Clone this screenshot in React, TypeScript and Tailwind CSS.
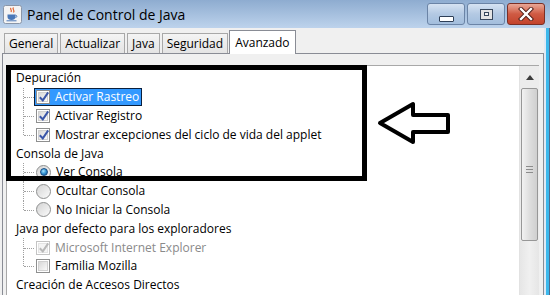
import React from 'react'

type Row = {
  kind: 'header' | 'check' | 'radio'
  label: string
  checked?: boolean
  selected?: boolean
  disabled?: boolean
  last?: boolean
}

const ROWS: Row[] = [
  { kind: 'header', label: 'Depuración' },
  { kind: 'check', label: 'Activar Rastreo', checked: true, selected: true },
  { kind: 'check', label: 'Activar Registro', checked: true },
  { kind: 'check', label: 'Mostrar excepciones del ciclo de vida del applet', checked: true, last: true },
  { kind: 'header', label: 'Consola de Java' },
  { kind: 'radio', label: 'Ver Consola', checked: true },
  { kind: 'radio', label: 'Ocultar Consola' },
  { kind: 'radio', label: 'No Iniciar la Consola', last: true },
  { kind: 'header', label: 'Java por defecto para los exploradores' },
  { kind: 'check', label: 'Microsoft Internet Explorer', checked: true, disabled: true },
  { kind: 'check', label: 'Familia Mozilla', last: true },
  { kind: 'header', label: 'Creación de Accesos Directos' },
  { kind: 'radio', label: 'No Crear Nunca' },
]

const TABS = ['General', 'Actualizar', 'Java', 'Seguridad']

function JavaIcon() {
  return (
    <svg width="19" height="19" viewBox="0 0 19 19">
      <rect x="0.5" y="0.5" width="18" height="18" rx="2" fill="#f4f4f4" stroke="#8a96a8" />
      <path d="M8 3c-1.5 1.5 1.5 2 0 4M10.5 2.5c-2 2 2 2.5 0 5" stroke="#e0602a" strokeWidth="1.2" fill="none" />
      <path d="M4.5 9.5h8v2.5c0 2-1.8 3-4 3s-4-1-4-3z" fill="#4a78b8" />
      <path d="M12.5 10.2c1.8 0 1.8 2.3 0 2.3" stroke="#4a78b8" strokeWidth="1" fill="none" />
      <path d="M3.5 15.8h10" stroke="#4a78b8" strokeWidth="1" />
    </svg>
  )
}

function CaptionButton({ kind }: { kind: 'min' | 'max' | 'close' }) {
  const isClose = kind === 'close'
  return (
    <div
      className={
        'relative w-[38px] h-[22px] rounded-[3px] border flex items-center justify-center overflow-hidden ' +
        (isClose
          ? 'border-[#7a2f26] bg-gradient-to-b from-[#e8a797] via-[#cf5a43] to-[#c3432c]'
          : 'border-[#6b84a6] bg-gradient-to-b from-[#d6e3f2] via-[#b3c9e3] to-[#a3bedd]')
      }
    >
      {kind === 'min' && <div className="mt-[9px] w-[15px] h-[6px] bg-white border border-[#2e3f57] rounded-[1px]" />}
      {kind === 'max' && (
        <div className="w-[13px] h-[11px] bg-[#e4e4e4] border border-[#38475c] flex items-center justify-center">
          <div className="w-[5px] h-[4px] border border-[#38475c] bg-[#f4f4f4]" />
        </div>
      )}
      {isClose && (
        <svg width="16" height="14" viewBox="0 0 16 14">
          <path d="M3 2l10 10M13 2L3 12" stroke="#4a1a14" strokeWidth="4.2" strokeLinecap="square" />
          <path d="M3 2l10 10M13 2L3 12" stroke="#ffffff" strokeWidth="2.4" strokeLinecap="square" />
        </svg>
      )}
    </div>
  )
}

function CheckBox({ checked, disabled }: { checked?: boolean; disabled?: boolean }) {
  return (
    <div
      className={
        'relative w-[14px] h-[14px] border flex items-center justify-center bg-white ' +
        (disabled ? 'border-[#c4c4c4]' : 'border-[#8e8f8f]')
      }
    >
      <div
        className={
          'w-[10px] h-[10px] border ' +
          (disabled
            ? 'border-[#e4e4e4] bg-[#f4f4f4]'
            : 'border-[#d0d0d0] bg-gradient-to-br from-[#d8d8d8] to-[#fafafa]')
        }
      />
      {checked && (
        <svg width="12" height="12" viewBox="0 0 12 12" className="absolute left-[1px] top-[0px]">
          <path
            d="M1.8 6.2l3 3.2 5.4-8"
            stroke={disabled ? '#b8b8b8' : '#3a56a8'}
            strokeWidth="2"
            fill="none"
          />
        </svg>
      )}
    </div>
  )
}

function Radio({ checked }: { checked?: boolean }) {
  return (
    <div className="w-[15px] h-[15px] rounded-full border border-[#8e8f8f] bg-gradient-to-br from-[#d4d4d4] to-[#fbfbfb] flex items-center justify-center">
      {checked && (
        <div className="w-[8px] h-[8px] rounded-full bg-[radial-gradient(circle_at_40%_35%,#a8e4ff_0%,#3a9ad8_45%,#0d4f8f_100%)] border border-[#1b4f86]" />
      )}
    </div>
  )
}

function TreeRow({ row }: { row: Row }) {
  if (row.kind === 'header') {
    return (
      <div className="h-[18.8px] flex items-center pl-[9px] text-black whitespace-nowrap">{row.label}</div>
    )
  }
  return (
    <div className="h-[18.8px] flex items-center whitespace-nowrap">
      {/* tree connector */}
      <div className="relative w-[27px] h-full shrink-0">
        <div
          className={
            'absolute left-[16px] top-0 border-l border-dotted border-[#a0a0a0] ' + (row.last ? 'h-1/2' : 'h-full')
          }
        />
        <div className="absolute left-[17px] top-1/2 w-[10px] border-t border-dotted border-[#a0a0a0]" />
      </div>
      <div
        className={
          'flex items-center h-[18px] pl-[1px] pr-[2px] border ' +
          (row.selected ? 'bg-[#3399ff] border-[#0a1f3d]' : 'border-transparent')
        }
      >
        {row.kind === 'check' ? <CheckBox checked={row.checked} disabled={row.disabled} /> : <Radio checked={row.checked} />}
        <span
          className={
            'ml-[5px] ' + (row.selected ? 'text-white' : row.disabled ? 'text-[#8a8a8a]' : 'text-black')
          }
        >
          {row.label}
        </span>
      </div>
    </div>
  )
}

function ScrollBar() {
  return (
    <div className="w-[20px] shrink-0 flex flex-col bg-[#ececec] border-l border-[#e2e2e2]">
      <div className="h-[22px] flex items-center justify-center">
        <svg width="8" height="5" viewBox="0 0 8 5">
          <path d="M0 5L4 0l4 5z" fill="#3c3c3c" />
        </svg>
      </div>
      <div className="mx-[1px] h-[153px] rounded-[2px] border border-[#979797] bg-gradient-to-r from-[#f2f2f2] via-[#dedede] to-[#cfcfcf] flex items-center justify-center">
        <div className="flex flex-col gap-[2px] mt-[10px]">
          <div className="w-[7px] h-[1px] bg-[#8c8c8c]" />
          <div className="w-[7px] h-[1px] bg-[#8c8c8c]" />
          <div className="w-[7px] h-[1px] bg-[#8c8c8c]" />
        </div>
      </div>
      <div className="flex-1 bg-gradient-to-r from-[#e6e6e6] via-[#f0f0f0] to-[#e6e6e6]" />
    </div>
  )
}

export default function App() {
  return (
    <div
      className="relative w-[550px] h-[295px] overflow-hidden bg-[#f0f0f0] text-[12px]"
      style={{ fontFamily: '"Open Sans", "Noto Sans", sans-serif' }}
    >
      {/* title bar */}
      <div className="h-[28px] flex items-center bg-gradient-to-b from-[#8eacd0] to-[#bdd3ec]">
        <div className="ml-[3px] mt-[1px]">
          <JavaIcon />
        </div>
        <div className="ml-[5px] text-[14px] text-black">Panel de Control de Java</div>
        <div className="ml-auto mr-[5px] flex gap-[2px] self-start mt-[3px]">
          <CaptionButton kind="min" />
          <CaptionButton kind="max" />
          <CaptionButton kind="close" />
        </div>
      </div>

      <div className="flex h-[267px]">
        <div className="flex-1 flex flex-col pl-[2px]">
          {/* tabs */}
          <div className="h-[24px] flex items-end pl-[2px] mt-[1px]">
            {TABS.map((t) => (
              <div
                key={t}
                className="h-[20px] px-[4px] mr-[2px] flex items-center border border-b-0 border-[#a8a8a8] bg-gradient-to-b from-[#f4f4f4] to-[#e4e4e4] text-black"
              >
                {t}
              </div>
            ))}
            <div className="h-[24px] px-[5px] -ml-[1px] flex items-center border border-b-0 border-[#898c95] bg-white text-black relative top-[1px] z-10">
              Avanzado
            </div>
          </div>
          {/* tab panel */}
          <div className="flex-1 border-t border-l border-r border-[#898c95] pt-[11px] pl-[3px] pr-[4px] flex">
            <div className="flex-1 border-t border-l border-[#a8a8a8] bg-white flex">
              <div className="flex-1 pt-[3px]">
                {ROWS.map((r, i) => (
                  <TreeRow key={i} row={r} />
                ))}
              </div>
              <ScrollBar />
            </div>
          </div>
        </div>
        {/* window frame right edge */}
        <div className="w-[6px] flex">
          <div className="w-[2px] bg-[#dfe9f5]" />
          <div className="w-[3px] bg-[#3cb8ec]" />
          <div className="w-[1px] bg-[#4f6c8f]" />
        </div>
      </div>

      {/* annotation box */}
      <div className="absolute left-[6px] top-[65px] w-[361px] h-[116px] border-[5px] border-black pointer-events-none" />
      {/* annotation arrow */}
      <svg className="absolute left-[374px] top-[99px]" width="80" height="48" viewBox="374 99 80 48">
        <path
          d="M380 123L413 104V115H448V132H413V142Z"
          fill="none"
          stroke="#000"
          strokeWidth="4"
          strokeLinejoin="round"
        />
      </svg>
    </div>
  )
}
